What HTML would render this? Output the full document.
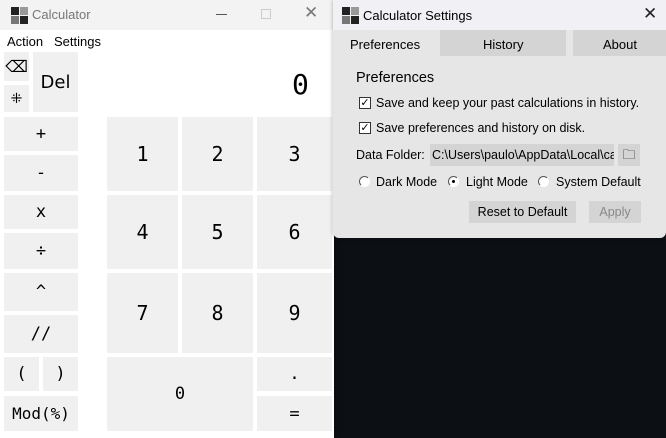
<!DOCTYPE html>
<html><head><meta charset="utf-8"><style>
*{margin:0;padding:0;box-sizing:border-box}
body{width:666px;height:438px;overflow:hidden;background:#0c0f14;position:relative;font-family:"Liberation Sans","DejaVu Sans",sans-serif}
.a{position:absolute}
.b{position:absolute;background:#f0f0f0;display:flex;align-items:center;justify-content:center;font-family:"DejaVu Sans Mono","Liberation Mono",monospace;color:#000}
.n{font-size:20px}
.o{font-size:17px}
.ico{position:absolute;width:18px;height:18px}
.ico div{position:absolute;width:8px;height:8px}
.s{font-family:"Liberation Sans","DejaVu Sans",sans-serif;font-size:12.5px;color:#000;white-space:nowrap}
.cb{position:absolute;width:12px;height:12px;border:1px solid #333;background:#fff;font-size:11px;line-height:10px;text-align:center;font-weight:bold}
.rd{position:absolute;width:11px;height:11px;border-radius:50%;border:1px solid #555;border-right-color:#fff;border-bottom-color:#fff;background:#fff}
</style></head><body>
<div class="a" style="left:0;top:0;width:334px;height:438px;background:#fff;box-shadow:2px 0 6px rgba(0,0,0,.3)"></div>
<div class="a" style="left:0;top:0;width:334px;height:30px;background:#f3f3f3"></div>
<div class="ico" style="left:11px;top:7px"><div style="left:0;top:0;background:#222"></div><div style="left:9px;top:0;background:#999"></div><div style="left:0;top:9px;background:#777"></div><div style="left:9px;top:9px;background:#222"></div></div>
<div class="a s" style="left:32px;top:7px;font-size:13px;color:#777">Calculator</div>
<div class="a" style="left:216px;top:14px;width:11px;height:1px;background:#555"></div>
<div class="a" style="left:261px;top:9px;width:10px;height:10px;border:1px solid #ccc"></div>
<div class="a" style="left:304px;top:3px;font-size:17px;color:#777">✕</div>
<div class="a s" style="left:7px;top:34px;font-size:13px">Action&nbsp;&nbsp; Settings</div>
<div class="b" style="left:4px;top:52px;width:25px;height:29px;font-family:'DejaVu Sans',sans-serif;font-size:16px">⌫</div>
<div class="b" style="left:4px;top:85px;width:25px;height:27px;font-size:14px">⁜</div>
<div class="b" style="left:33px;top:52px;width:45px;height:60px;font-family:'DejaVu Sans',sans-serif;font-size:18px">Del</div>
<div class="a" style="left:292px;top:68px;font-family:'DejaVu Sans Mono',monospace;font-size:28px">0</div>
<div class="b o" style="left:4px;top:117px;width:74px;height:34px">+</div>
<div class="b o" style="left:4px;top:155px;width:74px;height:36px">-</div>
<div class="b o" style="left:4px;top:195px;width:74px;height:34px">x</div>
<div class="b o" style="left:4px;top:233px;width:74px;height:36px">÷</div>
<div class="b o" style="left:4px;top:273px;width:74px;height:38px">^</div>
<div class="b o" style="left:4px;top:315px;width:74px;height:38px">//</div>
<div class="b o" style="left:4px;top:357px;width:35px;height:34px">(</div>
<div class="b o" style="left:43px;top:357px;width:35px;height:34px">)</div>
<div class="b" style="left:4px;top:396px;width:74px;height:35px;font-size:16px">Mod(%)</div>
<div class="b n" style="left:107px;top:117px;width:71px;height:74px">1</div>
<div class="b n" style="left:182px;top:117px;width:71px;height:74px">2</div>
<div class="b n" style="left:257px;top:117px;width:75px;height:74px">3</div>
<div class="b n" style="left:107px;top:195px;width:71px;height:74px">4</div>
<div class="b n" style="left:182px;top:195px;width:71px;height:74px">5</div>
<div class="b n" style="left:257px;top:195px;width:75px;height:74px">6</div>
<div class="b n" style="left:107px;top:273px;width:71px;height:80px">7</div>
<div class="b n" style="left:182px;top:273px;width:71px;height:80px">8</div>
<div class="b n" style="left:257px;top:273px;width:75px;height:80px">9</div>
<div class="b o" style="left:107px;top:357px;width:146px;height:74px">0</div>
<div class="b o" style="left:257px;top:357px;width:75px;height:34px">.</div>
<div class="b o" style="left:257px;top:396px;width:75px;height:35px">=</div>
<div class="a" style="left:333px;top:0;width:333px;height:238px;background:#e6e6e6;border-radius:0 0 6px 6px;box-shadow:0 0 4px rgba(0,0,0,.3)"></div>
<div class="a" style="left:333px;top:0;width:333px;height:30px;background:#f1f0f4"></div>
<div class="ico" style="left:342px;top:7px"><div style="left:0;top:0;background:#222"></div><div style="left:9px;top:0;background:#999"></div><div style="left:0;top:9px;background:#777"></div><div style="left:9px;top:9px;background:#222"></div></div>
<div class="a s" style="left:363px;top:8px;font-size:13px">Calculator Settings</div>
<div class="a" style="left:643px;top:4px;font-size:17px;color:#222">✕</div>
<div class="a" style="left:440px;top:30px;width:126px;height:26px;background:#d4d4d4"></div>
<div class="a" style="left:573px;top:30px;width:93px;height:26px;background:#d4d4d4"></div>
<div class="a s" style="left:350px;top:37px;font-size:13px">Preferences</div>
<div class="a s" style="left:483px;top:37px;font-size:13px">History</div>
<div class="a s" style="left:603px;top:37px;font-size:13px">About</div>
<div class="a s" style="left:356px;top:70px;font-size:14.5px">Preferences</div>
<div class="cb" style="left:359px;top:97px">✓</div>
<div class="a s" style="left:376px;top:96px">Save and keep your past calculations in history.</div>
<div class="cb" style="left:359px;top:122px">✓</div>
<div class="a s" style="left:376px;top:121px">Save preferences and history on disk.</div>
<div class="a s" style="left:356px;top:148px">Data Folder:</div>
<div class="a s" style="left:430px;top:144px;width:184px;height:22px;background:#d4d4d4;padding:4px 0 0 2px;overflow:hidden">C:\Users\paulo\AppData\Local\calc</div>
<div class="a" style="left:618px;top:144px;width:22px;height:22px;background:#d4d4d4;font-size:13px;text-align:center;line-height:22px">🗀</div>
<div class="rd" style="left:359px;top:176px"></div>
<div class="a s" style="left:376px;top:175px">Dark Mode</div>
<div class="rd" style="left:448px;top:176px"><div style="position:absolute;left:3px;top:3px;width:3px;height:3px;background:#000;border-radius:50%"></div></div>
<div class="a s" style="left:466px;top:175px">Light Mode</div>
<div class="rd" style="left:538px;top:176px"></div>
<div class="a s" style="left:556px;top:175px">System Default</div>
<div class="a s" style="left:469px;top:201px;width:107px;height:22px;background:#d4d4d4;text-align:center;line-height:22px">Reset to Default</div>
<div class="a s" style="left:589px;top:201px;width:52px;height:22px;background:#d4d4d4;text-align:center;line-height:22px;color:#888">Apply</div>
</body></html>
